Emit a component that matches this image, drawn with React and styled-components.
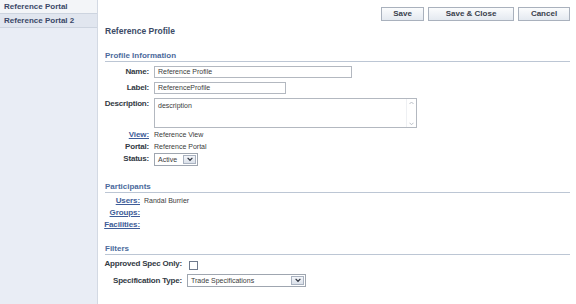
import React from "react";
import styled, { createGlobalStyle } from "styled-components";

const GlobalStyle = createGlobalStyle`
  html, body { margin: 0; padding: 0; background: #ffffff; }
  body { font-family: "Liberation Sans", Arial, sans-serif; }
  #root { width: 576px; height: 304px; overflow: hidden; }
`;

const Page = styled.div`
  display: flex;
  width: 576px;
  height: 304px;
`;

const Sidebar = styled.nav`
  width: 97px;
  flex: none;
  background: #e9edf5;
  border-right: 1px solid #d3d9e3;
  display: flex;
  flex-direction: column;
`;

const NavItem = styled.div`
  height: 13px;
  line-height: 13px;
  padding-left: 4px;
  font-size: 8px;
  font-weight: bold;
  color: #3a4868;
  background: ${(p) => (p.$active ? "#e1e6ef" : "#f3f5f8")};
  border-bottom: 1px solid #cdd4df;
  white-space: nowrap;
`;

const Main = styled.main`
  flex: 1;
  display: flex;
  flex-direction: column;
  padding: 7px 6px 0 7px;
  min-width: 0;
`;

const Toolbar = styled.div`
  display: flex;
  justify-content: flex-end;
  gap: 4px;
`;

const Button = styled.button`
  box-sizing: border-box;
  height: 14px;
  width: ${(p) => p.$w}px;
  padding: 0;
  font-family: inherit;
  font-size: 8px;
  font-weight: bold;
  color: #39404c;
  background: linear-gradient(#fbfcfd, #e4e9f0);
  border: 1px solid #a9b1bd;
  border-radius: 0;
  line-height: 12px;
`;

const Title = styled.h1`
  margin: 5px 0 0;
  font-size: 8.5px;
  line-height: 11px;
  font-weight: bold;
  color: #3c4a66;
`;

const SectionHeader = styled.h2`
  margin: ${(p) => p.$mt}px 0 0;
  font-size: 8px;
  line-height: 10px;
  font-weight: bold;
  color: #4b6a9c;
  border-bottom: 1px solid #bcc6d4;
`;

const FormGrid = styled.div`
  display: grid;
  grid-template-columns: ${(p) => p.$labelW}px auto;
  grid-template-rows: ${(p) => p.$rows};
  column-gap: ${(p) => p.$gap}px;
  row-gap: ${(p) => p.$rowGap || 0}px;
  margin-top: ${(p) => p.$mt}px;
  align-items: start;
  justify-items: start;
`;

const Label = styled.div`
  justify-self: end;
  font-size: 8px;
  font-weight: bold;
  letter-spacing: -0.2px;
  line-height: ${(p) => p.$lh || 12}px;
  color: #333a44;
  white-space: nowrap;
`;

const LinkLabel = styled.a`
  justify-self: end;
  font-size: 8px;
  font-weight: bold;
  letter-spacing: -0.1px;
  line-height: 12px;
  color: #3e5c98;
  text-decoration: underline;
  white-space: nowrap;
`;

const Value = styled.div`
  font-size: 7px;
  line-height: ${(p) => p.$lh || 12}px;
  color: #3b3b3b;
  white-space: nowrap;
`;

const TextBox = styled.div`
  box-sizing: border-box;
  width: ${(p) => p.$w}px;
  height: 12px;
  border: 1px solid #b3b8c0;
  background: #fff;
  padding-left: 3px;
  font-size: 7px;
  line-height: 10px;
  color: #3b3b3b;
  white-space: nowrap;
`;

const TextArea = styled.div`
  box-sizing: border-box;
  width: 263px;
  height: 30px;
  border: 1px solid #b3b8c0;
  background: #fff;
  display: flex;
`;

const TextAreaBody = styled.div`
  flex: 1;
  padding: 2px 3px;
  font-size: 7px;
  line-height: 9px;
  color: #3b3b3b;
`;

const ScrollBar = styled.div`
  width: 9px;
  display: flex;
  flex-direction: column;
  justify-content: space-between;
  align-items: center;
  padding: 2px 0;
  border-left: 1px solid #eef0f3;
`;

const Select = styled.div`
  box-sizing: border-box;
  width: ${(p) => p.$w}px;
  height: 13px;
  border: 1px solid #9fa6b0;
  background: #fff;
  display: flex;
  align-items: stretch;
`;

const SelectText = styled.div`
  flex: 1;
  padding-left: 3px;
  font-size: 7px;
  line-height: 11px;
  color: #3b3b3b;
  white-space: nowrap;
`;

const SelectArrow = styled.div`
  box-sizing: border-box;
  width: 13px;
  margin: 1px;
  border: 1px solid #a9b2c0;
  background: linear-gradient(#f4f6fa, #dbe1ea);
  display: flex;
  align-items: center;
  justify-content: center;
`;

const Checkbox = styled.div`
  box-sizing: border-box;
  width: 9px;
  height: 9px;
  margin: 4px 0 0 2px;
  border: 1px solid #6f7a8c;
  background: #fff;
`;

const Chevron = ({ up, color = "#2e3440", w = 6 }) => (
  <svg width={w} height={w * 0.7} viewBox="0 0 10 7">
    <path
      d={up ? "M1 6 L5 2 L9 6" : "M1 1.5 L5 5.5 L9 1.5"}
      fill="none"
      stroke={color}
      strokeWidth="2"
    />
  </svg>
);

const SelectBox = ({ w, children }) => (
  <Select $w={w}>
    <SelectText>{children}</SelectText>
    <SelectArrow>
      <Chevron w={6} />
    </SelectArrow>
  </Select>
);

export default function App() {
  return (
    <>
      <GlobalStyle />
      <Page>
        <Sidebar>
          <NavItem>Reference Portal</NavItem>
          <NavItem $active>Reference Portal 2</NavItem>
        </Sidebar>
        <Main>
          <Toolbar>
            <Button $w={43}>Save</Button>
            <Button $w={86}>Save &amp; Close</Button>
            <Button $w={52}>Cancel</Button>
          </Toolbar>
          <Title>Reference Profile</Title>

          <SectionHeader $mt={14}>Profile Information</SectionHeader>
          <FormGrid
            $labelW={44}
            $gap={5}
            $mt={4}
            $rows="16px 16px 31px 12px 12px 12px"
          >
            <Label>Name:</Label>
            <TextBox $w={198}>Reference Profile</TextBox>
            <Label>Label:</Label>
            <TextBox $w={132}>ReferenceProfile</TextBox>
            <Label>Description:</Label>
            <TextArea>
              <TextAreaBody>description</TextAreaBody>
              <ScrollBar>
                <Chevron up color="#b9bec6" w={5} />
                <Chevron color="#b9bec6" w={5} />
              </ScrollBar>
            </TextArea>
            <LinkLabel href="#">View:</LinkLabel>
            <Value>Reference View</Value>
            <Label>Portal:</Label>
            <Value>Reference Portal</Value>
            <Label>Status:</Label>
            <SelectBox w={44}>Active</SelectBox>
          </FormGrid>

          <SectionHeader $mt={17}>Participants</SectionHeader>
          <FormGrid $labelW={35} $gap={4} $mt={2} $rows="12px 12px 12px">
            <LinkLabel href="#">Users:</LinkLabel>
            <Value>Randal Burrier</Value>
            <LinkLabel href="#">Groups:</LinkLabel>
            <Value />
            <LinkLabel href="#">Facilities:</LinkLabel>
            <Value />
          </FormGrid>

          <SectionHeader $mt={13}>Filters</SectionHeader>
          <FormGrid
            $labelW={77}
            $gap={5}
            $mt={2}
            $rowGap={3}
            $rows="14px 13px"
          >
            <Label $lh={14}>Approved Spec Only:</Label>
            <Checkbox />
            <Label $lh={13}>Specification Type:</Label>
            <SelectBox w={119}>Trade Specifications</SelectBox>
          </FormGrid>
        </Main>
      </Page>
    </>
  );
}
